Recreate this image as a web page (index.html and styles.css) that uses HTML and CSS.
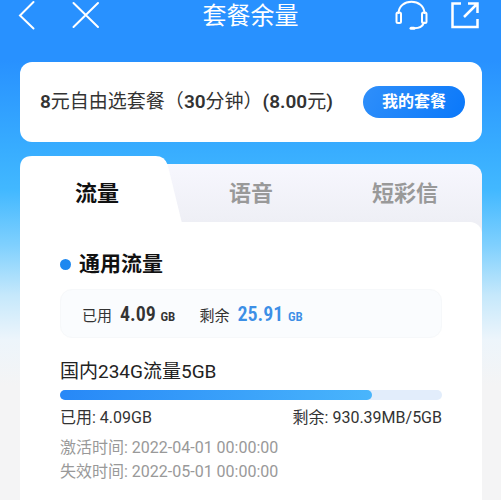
FILE: index.html
```html
<!DOCTYPE html>
<html lang="zh-CN">
<head>
<meta charset="utf-8">
<meta name="viewport" content="width=device-width, initial-scale=1">
<title>套餐余量</title>
<link rel="stylesheet" href="styles.css">
</head>
<body>
<header class="topbar">
  <div class="topbar-side">
    <button class="icon-btn" type="button" aria-label="返回">
      <svg width="20" height="32" viewBox="0 0 20 32"><path d="M15.500 2 2 15.500 15.500 28.500"/></svg>
    </button>
    <button class="icon-btn" type="button" aria-label="关闭">
      <svg width="28" height="32" viewBox="0 0 28 32"><path d="M1.500 3 26 27M26 3 1.500 27"/></svg>
    </button>
  </div>
  <h1 class="topbar-title">套餐余量</h1>
  <div class="topbar-side topbar-side-end">
    <button class="icon-btn" type="button" aria-label="客服">
      <svg width="34" height="32" viewBox="0 0 34 32"><path d="M3.500 13C4 6 9.500 1.800 16.500 1.800S29 6 29.500 13M29 22.500C28 26 24.500 28.200 19 28.200"/><rect x="1.500" y="12.500" width="4.500" height="10.500" rx="1.500"/><rect x="27" y="12.500" width="4.500" height="10.500" rx="1.500"/><path class="thick" d="M16 28.300h3"/></svg>
    </button>
    <button class="icon-btn" type="button" aria-label="分享">
      <svg width="28" height="32" viewBox="0 0 28 32"><path class="square" d="M10 3.500H1.500V27H26.500V19M17 3.500H26.500V13M26 4 13 17"/></svg>
    </button>
  </div>
</header>
<main class="page">
  <section class="plan">
    <p class="plan-name"><b>8</b>元自由选套餐（<b>30</b>分钟）<b>(8.00</b>元<b>)</b></p>
    <button class="plan-btn" type="button">我的套餐</button>
  </section>
  <section class="usage">
    <div class="tabs" role="tablist">
      <button class="tab tab-active" type="button" role="tab" aria-selected="true">
        <svg class="tab-shape" viewBox="0 0 162 66" preserveAspectRatio="none" aria-hidden="true"><path d="M0 66V12Q0 0 12 0H136Q145 0 148 9L162 66Z"/></svg>
        <span class="tab-label">流量</span>
      </button>
      <button class="tab" type="button" role="tab" aria-selected="false"><span class="tab-label">语音</span></button>
      <button class="tab" type="button" role="tab" aria-selected="false"><span class="tab-label">短彩信</span></button>
    </div>
    <div class="panel-wrap">
      <div class="panel" role="tabpanel">
        <h2 class="group-title">通用流量</h2>
        <div class="summary">
          <div class="stat"><span>已用</span><span class="figure">4.09 <small>GB</small></span></div>
          <div class="stat"><span>剩余</span><span class="figure figure-left">25.91 <small>GB</small></span></div>
        </div>
        <h3 class="item-title">国内234G流量5GB</h3>
        <div class="bar"><div class="bar-fill" style="width:81.6%"></div></div>
        <div class="item-row"><span>已用: 4.09GB</span><span>剩余: 930.39MB/5GB</span></div>
        <p class="dates">激活时间: 2022-04-01 00:00:00<br>失效时间: 2022-05-01 00:00:00</p>
      </div>
    </div>
  </section>
</main>
</body>
</html>
```

FILE: styles.css
```css
* {
  box-sizing: border-box;
}

html {
  background: #f4f4f5;
}

body {
  margin: 0;
  min-height: 100vh;
  display: flex;
  flex-direction: column;
  font-family: Roboto, "Noto Sans CJK SC", sans-serif;
  color: #333;
  background: linear-gradient(#2891ff 0, #2891ff 60px, #38adff 150px, #42b8ff 190px, #7fd0fe 245px, #c5e8fb 295px, #edf5fb 340px, #f4f4f5 385px);
}

h1, h2, h3, p {
  margin: 0;
}

button {
  border: 0;
  padding: 0;
  background: none;
  font: inherit;
  color: inherit;
}

.topbar {
  display: grid;
  grid-template-columns: 1fr auto 1fr;
  align-items: center;
  height: 32px;
  padding: 0 18px;
  color: #fff;
}

.topbar-side {
  display: flex;
  gap: 34px;
}

.topbar-side-end {
  justify-content: flex-end;
  gap: 22px;
  padding-right: 4px;
}

.topbar-title {
  font-size: 24px;
  font-weight: 400;
  line-height: 32px;
}

.icon-btn svg {
  display: block;
  fill: none;
  stroke: #fff;
  stroke-width: 2;
  stroke-linecap: round;
}

.icon-btn .thick {
  stroke-width: 3;
}

.icon-btn .square {
  stroke-width: 2.5;
  stroke-linecap: butt;
}

.page {
  flex: 1;
  display: flex;
  flex-direction: column;
  gap: 14px;
  padding: 30px 19px 0 20px;
}

.plan {
  display: flex;
  align-items: center;
  justify-content: space-between;
  min-height: 80px;
  padding: 0 17px 0 20px;
  border-radius: 12px;
  background: #fff;
}

.plan-name {
  font-size: 19px;
  line-height: 28px;
}

.plan-name b {
  font-weight: 600;
}

.plan-btn {
  height: 32px;
  padding: 0 19px;
  border-radius: 16px;
  font-size: 16px;
  font-weight: 700;
  line-height: 30px;
  color: #fff;
  background: linear-gradient(120deg, #2f8ffa, #0a78fa);
}

.usage {
  flex: 1;
  display: flex;
  flex-direction: column;
}

.tabs {
  position: relative;
  display: grid;
  grid-template-columns: repeat(3, 1fr);
  height: 66px;
  padding-top: 8px;
}

.tabs::before {
  content: "";
  position: absolute;
  inset: 8px 0 0 12px;
  border-radius: 0 12px 0 0;
  background: linear-gradient(#f7f7fe, #eeeff5);
}

.tab {
  position: relative;
  padding-top: 2px;
  font-size: 22px;
  font-weight: 700;
  line-height: 56px;
  color: #999;
}

.tab-active {
  color: #111;
}

.tab-shape {
  position: absolute;
  left: 0;
  bottom: 0;
  width: 105%;
  height: 66px;
  fill: #fff;
}

.tab-label {
  position: relative;
}

.panel-wrap {
  flex: 1;
  display: flex;
  background: linear-gradient(#eeeff5 12px, #fff 12px);
}

.panel {
  flex: 1;
  padding: 26px 40px 16px;
  border-radius: 0 12px 0 0;
  background: #fff;
}

.group-title {
  display: flex;
  align-items: center;
  gap: 8px;
  font-size: 21px;
  line-height: 32px;
  color: #111;
}

.group-title::before {
  content: "";
  width: 11px;
  height: 11px;
  border-radius: 50%;
  background: #1e88f0;
}

.summary {
  display: flex;
  align-items: center;
  gap: 24px;
  height: 49px;
  margin-top: 9px;
  padding: 0 21px;
  border: 1px solid #f6f8fa;
  border-radius: 12px;
  background: #fafcfe;
}

.stat {
  display: flex;
  align-items: baseline;
  gap: 8px;
  font-size: 15px;
}

.figure {
  font-family: "Roboto Condensed", "Liberation Sans Narrow", sans-serif;
  font-size: 20px;
  font-weight: 600;
}

.figure small {
  font-size: 13px;
}

.figure-left {
  color: #3c8fe6;
}

.item-title {
  margin-top: 20px;
  font-size: 19px;
  font-weight: 400;
  line-height: 28px;
  color: #222;
}

.bar {
  height: 10px;
  margin-top: 4px;
  border-radius: 5px;
  background: #e2edfb;
}

.bar-fill {
  height: 100%;
  border-radius: 5px;
  background: linear-gradient(90deg, #2788f7, #49b5fc);
}

.item-row {
  display: flex;
  justify-content: space-between;
  margin-top: 6px;
  font-size: 16px;
  line-height: 24px;
}

.dates {
  margin-top: 6px;
  font-size: 16px;
  line-height: 24px;
  color: #999;
}
```
